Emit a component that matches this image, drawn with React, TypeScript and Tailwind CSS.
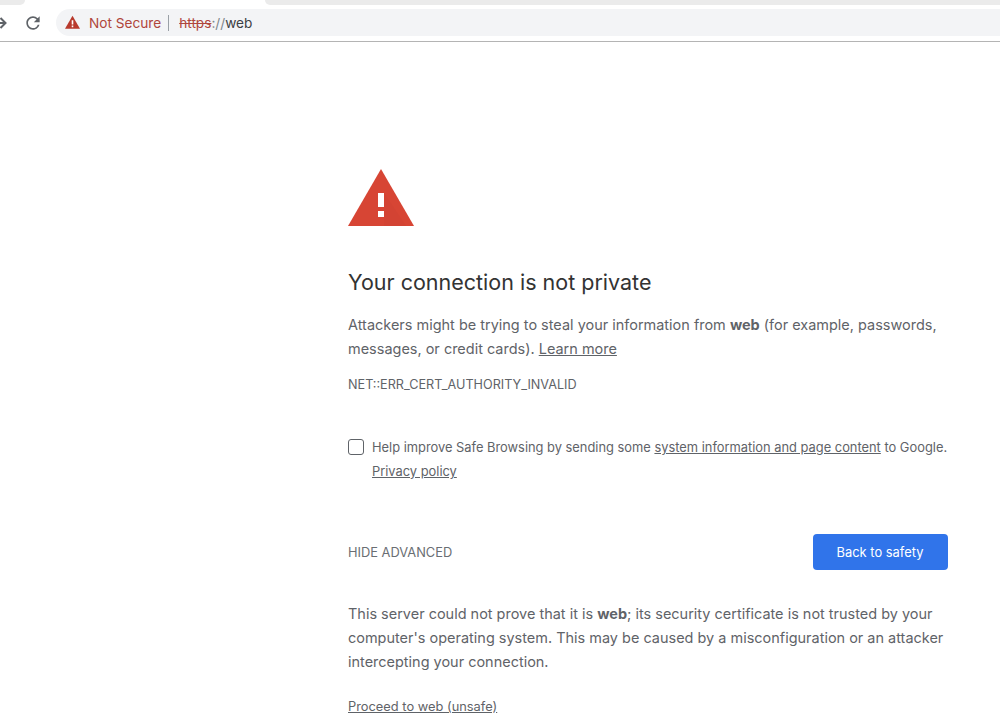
export default function App() {
  return (
    <div className="h-[722px] w-[1000px] overflow-hidden bg-white font-['Inter',sans-serif] text-[#5f6368]">
      <header className="h-[42px] border-b border-[#b4b4b4]">
        <div className="flex h-[5px] justify-between">
          <div className="h-[5px] w-[25px] rounded-br-[6px] bg-[#ebebeb]" />
          <div className="h-[5px] w-[735px] rounded-bl-[6px] bg-[#ebebeb]" />
        </div>
        <div className="mt-[4px] flex h-[27px] items-center">
          <svg className="ml-[-7px] h-[14px] w-[14px]" viewBox="0 0 14 14" fill="none" stroke="#5f6368" strokeWidth="2">
            <path d="M1 7H12.5M7.5 2L12.5 7L7.5 12" />
          </svg>
          <svg className="ml-[16px] h-[20px] w-[20px]" viewBox="0 0 24 24" fill="#5f6368">
            <path d="M17.65 6.35A7.958 7.958 0 0 0 12 4c-4.42 0-7.99 3.58-7.99 8s3.57 8 7.99 8c3.73 0 6.84-2.55 7.73-6h-2.08A5.99 5.99 0 0 1 12 18c-3.31 0-6-2.69-6-6s2.69-6 6-6c1.66 0 3.14.69 4.22 1.78L13 11h7V4l-2.35 2.35z" />
          </svg>
          <div className="ml-[13px] flex h-[27px] flex-1 items-center rounded-l-[14px] bg-[#f3f4f6] pl-[9px] text-[13.65px]">
            <svg className="h-[15px] w-[15px]" viewBox="0 0 15 15">
              <path d="M7.5 0.8L15 13.8H0Z" fill="#b83a2d" />
              <path d="M6.7 5.2H8.3V9.6H6.7ZM6.7 10.6H8.3V12.2H6.7Z" fill="#fff" />
            </svg>
            <span className="ml-[9px] pt-[1px] text-[#b0463c]">Not Secure</span>
            <span className="ml-[7px] h-[16px] w-px bg-[#9aa0a6]" />
            <span className="ml-[10px] pt-[1px]">
              <span className="text-[#b0463c] line-through">https</span>
              <span className="text-[#80868b]">://</span>
              <span className="text-[#3c4043]">web</span>
            </span>
          </div>
        </div>
      </header>
      <main className="ml-[348px] w-[600px] pt-[127px]">
        <svg className="block h-[57px] w-[66px]" viewBox="0 0 66 57">
          <path d="M33 0L66 57H0Z" fill="#d74534" />
          <path d="M36 24L58 57H36Z" fill="#c9402f" opacity="0.25" />
          <path d="M30 24H36V38H30ZM30 42H36V48H30Z" fill="#fff" />
        </svg>
        <h1 className="mt-[39px] text-[21.5px] font-normal leading-[34px] text-[#333]">Your connection is not private</h1>
        <p className="mt-[14px] text-[14.47px] leading-[24px]">
          Attackers might be trying to steal your information from <b className="font-bold">web</b> (for example, passwords, messages, or credit cards). <a className="underline">Learn more</a>
        </p>
        <p className="mt-[12px] text-[12.67px] leading-[24px]">NET::ERR_CERT_AUTHORITY_INVALID</p>
        <div className="mt-[39px] flex">
          <span className="mt-[3px] h-[16px] w-[16px] shrink-0 rounded-[3px] border border-[#5f6368]" />
          <div className="ml-[8px] text-[12.86px] leading-[24px] whitespace-nowrap">
            <p>
              Help improve Safe Browsing by sending some <a className="underline">system information and page content</a> to Google.
            </p>
            <a className="block underline">Privacy policy</a>
          </div>
        </div>
        <div className="mt-[50px] flex items-center justify-between">
          <span className="pt-[2px] text-[12.85px] text-[#6a6e73]">HIDE ADVANCED</span>
          <button className="h-[36px] w-[135px] rounded-[4px] bg-[#3074ea] pt-[1px] pr-[1px] text-[12.9px] text-white">Back to safety</button>
        </div>
        <p className="mt-[32px] text-[14.47px] leading-[24px]">
          This server could not prove that it is <b className="font-bold">web</b>; its security certificate is not trusted by your computer's operating system. This may be caused by a misconfiguration or an attacker intercepting your connection.
        </p>
        <a className="mt-[21px] block text-[12.85px] leading-[24px] underline">Proceed to web (unsafe)</a>
      </main>
    </div>
  );
}
